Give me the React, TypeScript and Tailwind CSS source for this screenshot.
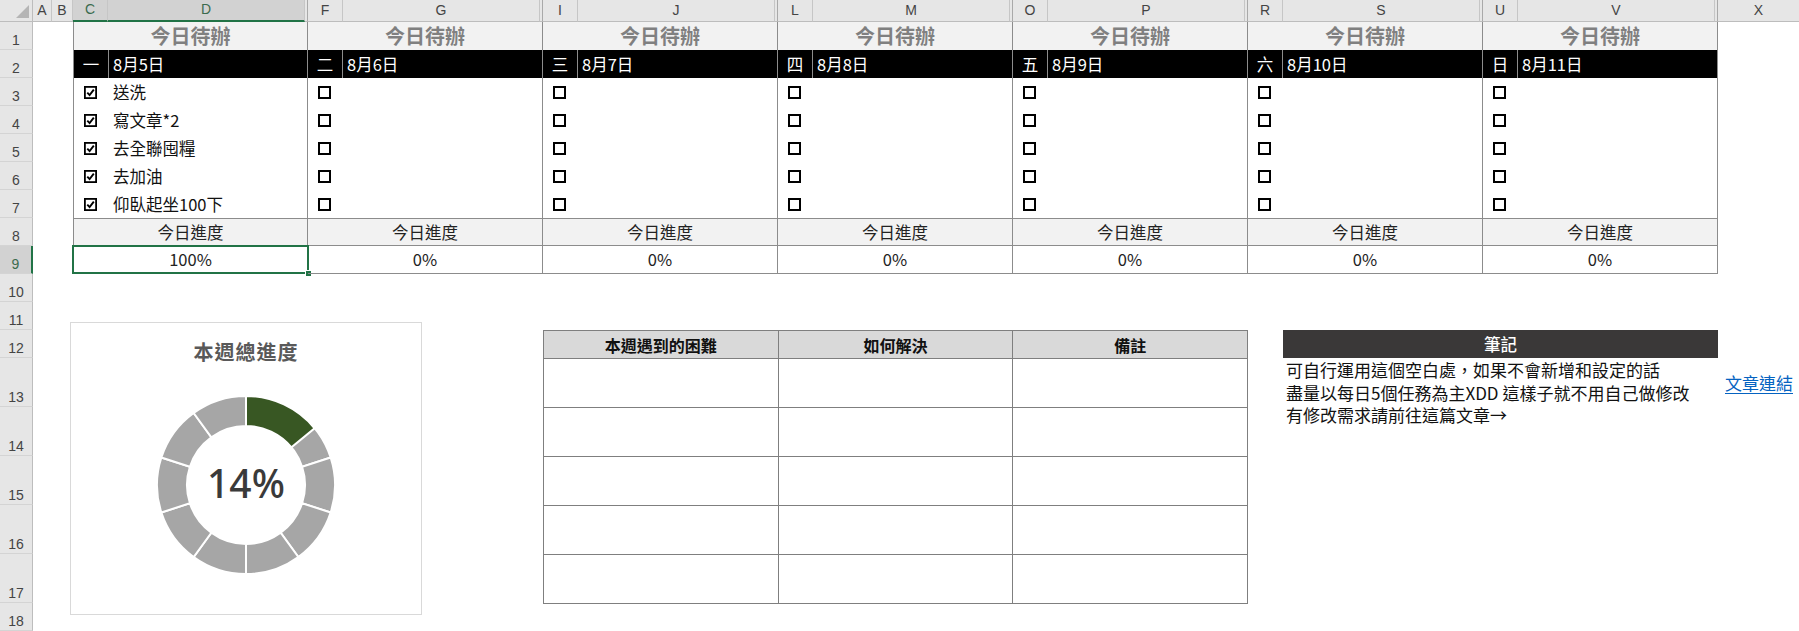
import React from 'react';

interface Day {
  weekday: string;
  date: string;
  tasks: string[];
  progress: string;
}

const days: Day[] = [
  {
    weekday: '一',
    date: '8月5日',
    tasks: ['送洗', '寫文章*2', '去全聯囤糧', '去加油', '仰臥起坐100下'],
    progress: '100%',
  },
  { weekday: '二', date: '8月6日', tasks: [], progress: '0%' },
  { weekday: '三', date: '8月7日', tasks: [], progress: '0%' },
  { weekday: '四', date: '8月8日', tasks: [], progress: '0%' },
  { weekday: '五', date: '8月9日', tasks: [], progress: '0%' },
  { weekday: '六', date: '8月10日', tasks: [], progress: '0%' },
  { weekday: '日', date: '8月11日', tasks: [], progress: '0%' },
];

const columnPairs = [
  ['C', 'D'],
  ['F', 'G'],
  ['I', 'J'],
  ['L', 'M'],
  ['O', 'P'],
  ['R', 'S'],
  ['U', 'V'],
];

// rows 1-12 are standard height, 13-17 are the tall review rows
const rowNumbers = Array.from({ length: 18 }, (_, i) => i + 1);

const reviewHeads = ['本週遇到的困難', '如何解決', '備註'];

function CheckBox({ checked }: { checked: boolean }) {
  if (!checked) {
    return <div className="size-[13px] border-2 border-black" />;
  }
  return (
    <svg width="13" height="13" viewBox="0 0 13 13">
      <rect x="0.9" y="0.9" width="11.2" height="11.2" fill="none" stroke="#000" strokeWidth="1.8" />
      <path d="M3.3 6.6 L5.6 9.1 L9.8 3.6" fill="none" stroke="#000" strokeWidth="1.9" />
    </svg>
  );
}

function ColumnHeaders() {
  return (
    <div className="flex h-[22px] shrink-0 bg-[#e6e6e6] font-['Liberation_Sans',sans-serif] text-[14px] leading-none text-[#444]">
      <div className="relative w-[33px] shrink-0 border-r border-b border-[#bdbdbd]">
        <svg className="absolute right-[3px] bottom-[3px]" width="13" height="13" viewBox="0 0 13 13">
          <polygon points="13,0 13,13 0,13" fill="#b5b5b5" />
        </svg>
      </div>
      <div className="flex w-[19px] shrink-0 items-center justify-center border-r border-b border-[#c6c6c6] border-b-[#bdbdbd] pb-[2px]">
        A
      </div>
      <div className="flex w-[21px] shrink-0 items-center justify-center border-r border-b border-[#c6c6c6] border-b-[#bdbdbd] pb-[2px]">
        B
      </div>
      {columnPairs.map(([a, b], i) => (
        <div key={a} className="flex w-[235px] shrink-0">
          <div
            className={`flex w-[35px] shrink-0 items-center justify-center border-r border-[#c6c6c6] pb-[2px] ${
              i === 0 ? 'border-b-2 border-b-[#217346] bg-[#d2d2d2] text-[#3b6b4e]' : 'border-b border-b-[#bdbdbd]'
            }`}
          >
            {a}
          </div>
          <div
            className={`flex w-[197px] shrink-0 items-center justify-center border-r border-[#c6c6c6] pb-[2px] ${
              i === 0 ? 'border-b-2 border-b-[#217346] bg-[#d2d2d2] text-[#3b6b4e]' : 'border-b border-b-[#bdbdbd]'
            }`}
          >
            {b}
          </div>
          {/* hidden column between the pairs */}
          <div className="w-[3px] shrink-0 border-r border-b border-[#a9a9a9] border-b-[#bdbdbd]" />
        </div>
      ))}
      <div className="flex flex-1 items-center justify-center border-b border-[#bdbdbd] pb-[2px]">X</div>
    </div>
  );
}

function RowHeaders() {
  return (
    <div className="flex w-[33px] shrink-0 flex-col bg-[#e6e6e6] font-['Liberation_Sans',sans-serif] text-[14px] leading-none text-[#444]">
      {rowNumbers.map((n) => (
        <div
          key={n}
          className={`flex shrink-0 items-end justify-center border-b border-[#d4d4d4] pb-[2px] ${
            n >= 13 && n <= 17 ? 'h-[49px]' : 'h-[28px]'
          } ${n === 9 ? 'border-r-2 border-r-[#217346] bg-[#d2d2d2] text-[#3b6b4e]' : 'border-r border-r-[#bdbdbd]'}`}
        >
          {n}
        </div>
      ))}
    </div>
  );
}

function DayColumn({ day, first }: { day: Day; first: boolean }) {
  return (
    <div
      className={`flex w-[235px] shrink-0 flex-col border-r border-[#8c8c8c] text-[16.5px] ${
        first ? 'border-l' : ''
      }`}
    >
      <div className="flex h-[28px] items-center justify-center bg-[#f2f2f2] text-[20px] font-semibold text-[#808080]">
        今日待辦
      </div>
      <div className="flex h-[28px] bg-black text-white">
        <div className="flex w-[35px] shrink-0 items-center justify-center border-r border-[#8c8c8c]">
          {day.weekday}
        </div>
        <div className="flex items-center pl-[4px]">{day.date}</div>
      </div>
      {[0, 1, 2, 3, 4].map((i) => (
        <div key={i} className="flex h-[28px] items-center">
          <div className="flex w-[35px] shrink-0 justify-center pr-[2px] pt-[1px]">
            <CheckBox checked={Boolean(day.tasks[i])} />
          </div>
          <span className="pl-[4px] text-[#111]">{day.tasks[i]}</span>
        </div>
      ))}
      <div className="flex h-[28px] items-center justify-center border-y border-[#8c8c8c] bg-[#f2f2f2] text-[#222]">
        今日進度
      </div>
      <div className="relative flex h-[28px] items-center justify-center border-b border-[#8c8c8c] text-[#222]">
        {day.progress}
        {first && (
          <>
            <div className="pointer-events-none absolute -top-[1px] -right-[2px] -bottom-[1px] -left-[2px] border-2 border-[#217346]" />
            <div className="absolute -right-[5px] -bottom-[4px] size-[7px] border border-white bg-[#217346]" />
          </>
        )}
      </div>
    </div>
  );
}

function arcPath(a0: number, a1: number, R: number, r: number, c: number) {
  const pt = (a: number, rr: number) => {
    const t = ((a - 90) * Math.PI) / 180;
    return `${(c + rr * Math.cos(t)).toFixed(2)} ${(c + rr * Math.sin(t)).toFixed(2)}`;
  };
  const large = a1 - a0 > 180 ? 1 : 0;
  return `M ${pt(a0, R)} A ${R} ${R} 0 ${large} 1 ${pt(a1, R)} L ${pt(a1, r)} A ${r} ${r} 0 ${large} 0 ${pt(a0, r)} Z`;
}

function WeekChart() {
  const done = 0.14 * 360;
  return (
    <div className="mt-[48px] flex h-[293px] w-[352px] shrink-0 flex-col items-center border border-[#d9d9d9]">
      <div className="mt-[14px] text-[20px] font-bold leading-[30px] tracking-[1px] text-[#595959]">本週總進度</div>
      <div className="relative mt-[28px] size-[180px]">
        <svg width="180" height="180" viewBox="0 0 180 180">
          {Array.from({ length: 10 }, (_, i) => (
            <path key={i} d={arcPath(i * 36, (i + 1) * 36, 89, 59, 90)} fill="#a6a6a6" stroke="#fff" strokeWidth="2" />
          ))}
          <path d={arcPath(0, done, 89, 59, 90)} fill="#385723" stroke="#fff" strokeWidth="2" />
        </svg>
        <div className="absolute inset-0 flex items-center justify-center pb-[3px] font-['Noto_Sans',sans-serif] text-[39px] font-medium text-[#3a3a3a]">
          14%
        </div>
      </div>
    </div>
  );
}

function ReviewTable() {
  return (
    <table className="mt-[56px] w-[705px] shrink-0 table-fixed border-collapse text-[16px]">
      <thead>
        <tr className="h-[28px] bg-[#d9d9d9]">
          {reviewHeads.map((h) => (
            <th key={h} className="border border-[#7f7f7f] p-0 font-bold text-[#111]">
              {h}
            </th>
          ))}
        </tr>
      </thead>
      <tbody>
        {[0, 1, 2, 3, 4].map((r) => (
          <tr key={r} className="h-[49px]">
            {reviewHeads.map((h) => (
              <td key={h} className="border border-[#7f7f7f] p-0" />
            ))}
          </tr>
        ))}
      </tbody>
    </table>
  );
}

function Notes() {
  return (
    <div className="mt-[56px] w-[435px] shrink-0">
      <div className="flex h-[28px] items-center justify-center bg-[#3a3838] text-[16.5px] font-medium text-white">
        筆記
      </div>
      <div className="pl-[3px] pt-[1px] text-[17px] leading-[22.5px] text-[#111]">
        <p>可自行運用這個空白處，如果不會新增和設定的話</p>
        <p>盡量以每日5個任務為主XDD 這樣子就不用自己做修改</p>
        <p>有修改需求請前往這篇文章→</p>
      </div>
    </div>
  );
}

export default function App() {
  return (
    <div className="flex h-[631px] w-[1799px] flex-col overflow-hidden bg-white font-['Noto_Sans_CJK_TC','Noto_Sans_CJK_JP',sans-serif] text-black">
      <ColumnHeaders />
      <div className="flex">
        <RowHeaders />
        <div className="flex flex-1 flex-col">
          {/* rows 1-9: the weekly to-do board */}
          <div className="flex">
            <div className="w-[40px] shrink-0" />
            {days.map((d, i) => (
              <DayColumn key={d.date} day={d} first={i === 0} />
            ))}
          </div>

          {/* rows 10-18: chart, review table, notes */}
          <div className="flex items-start">
            <div className="w-[37px] shrink-0" />
            <WeekChart />
            <div className="w-[121px] shrink-0" />
            <ReviewTable />
            <div className="w-[35px] shrink-0" />
            <Notes />
            <div className="mt-[84px] flex h-[49px] flex-1 items-center whitespace-nowrap pl-[7px]">
              <a href="#" className="text-[17px] text-[#0563c1] underline underline-offset-[3px]">
                文章連結
              </a>
            </div>
          </div>
        </div>
      </div>
    </div>
  );
}
